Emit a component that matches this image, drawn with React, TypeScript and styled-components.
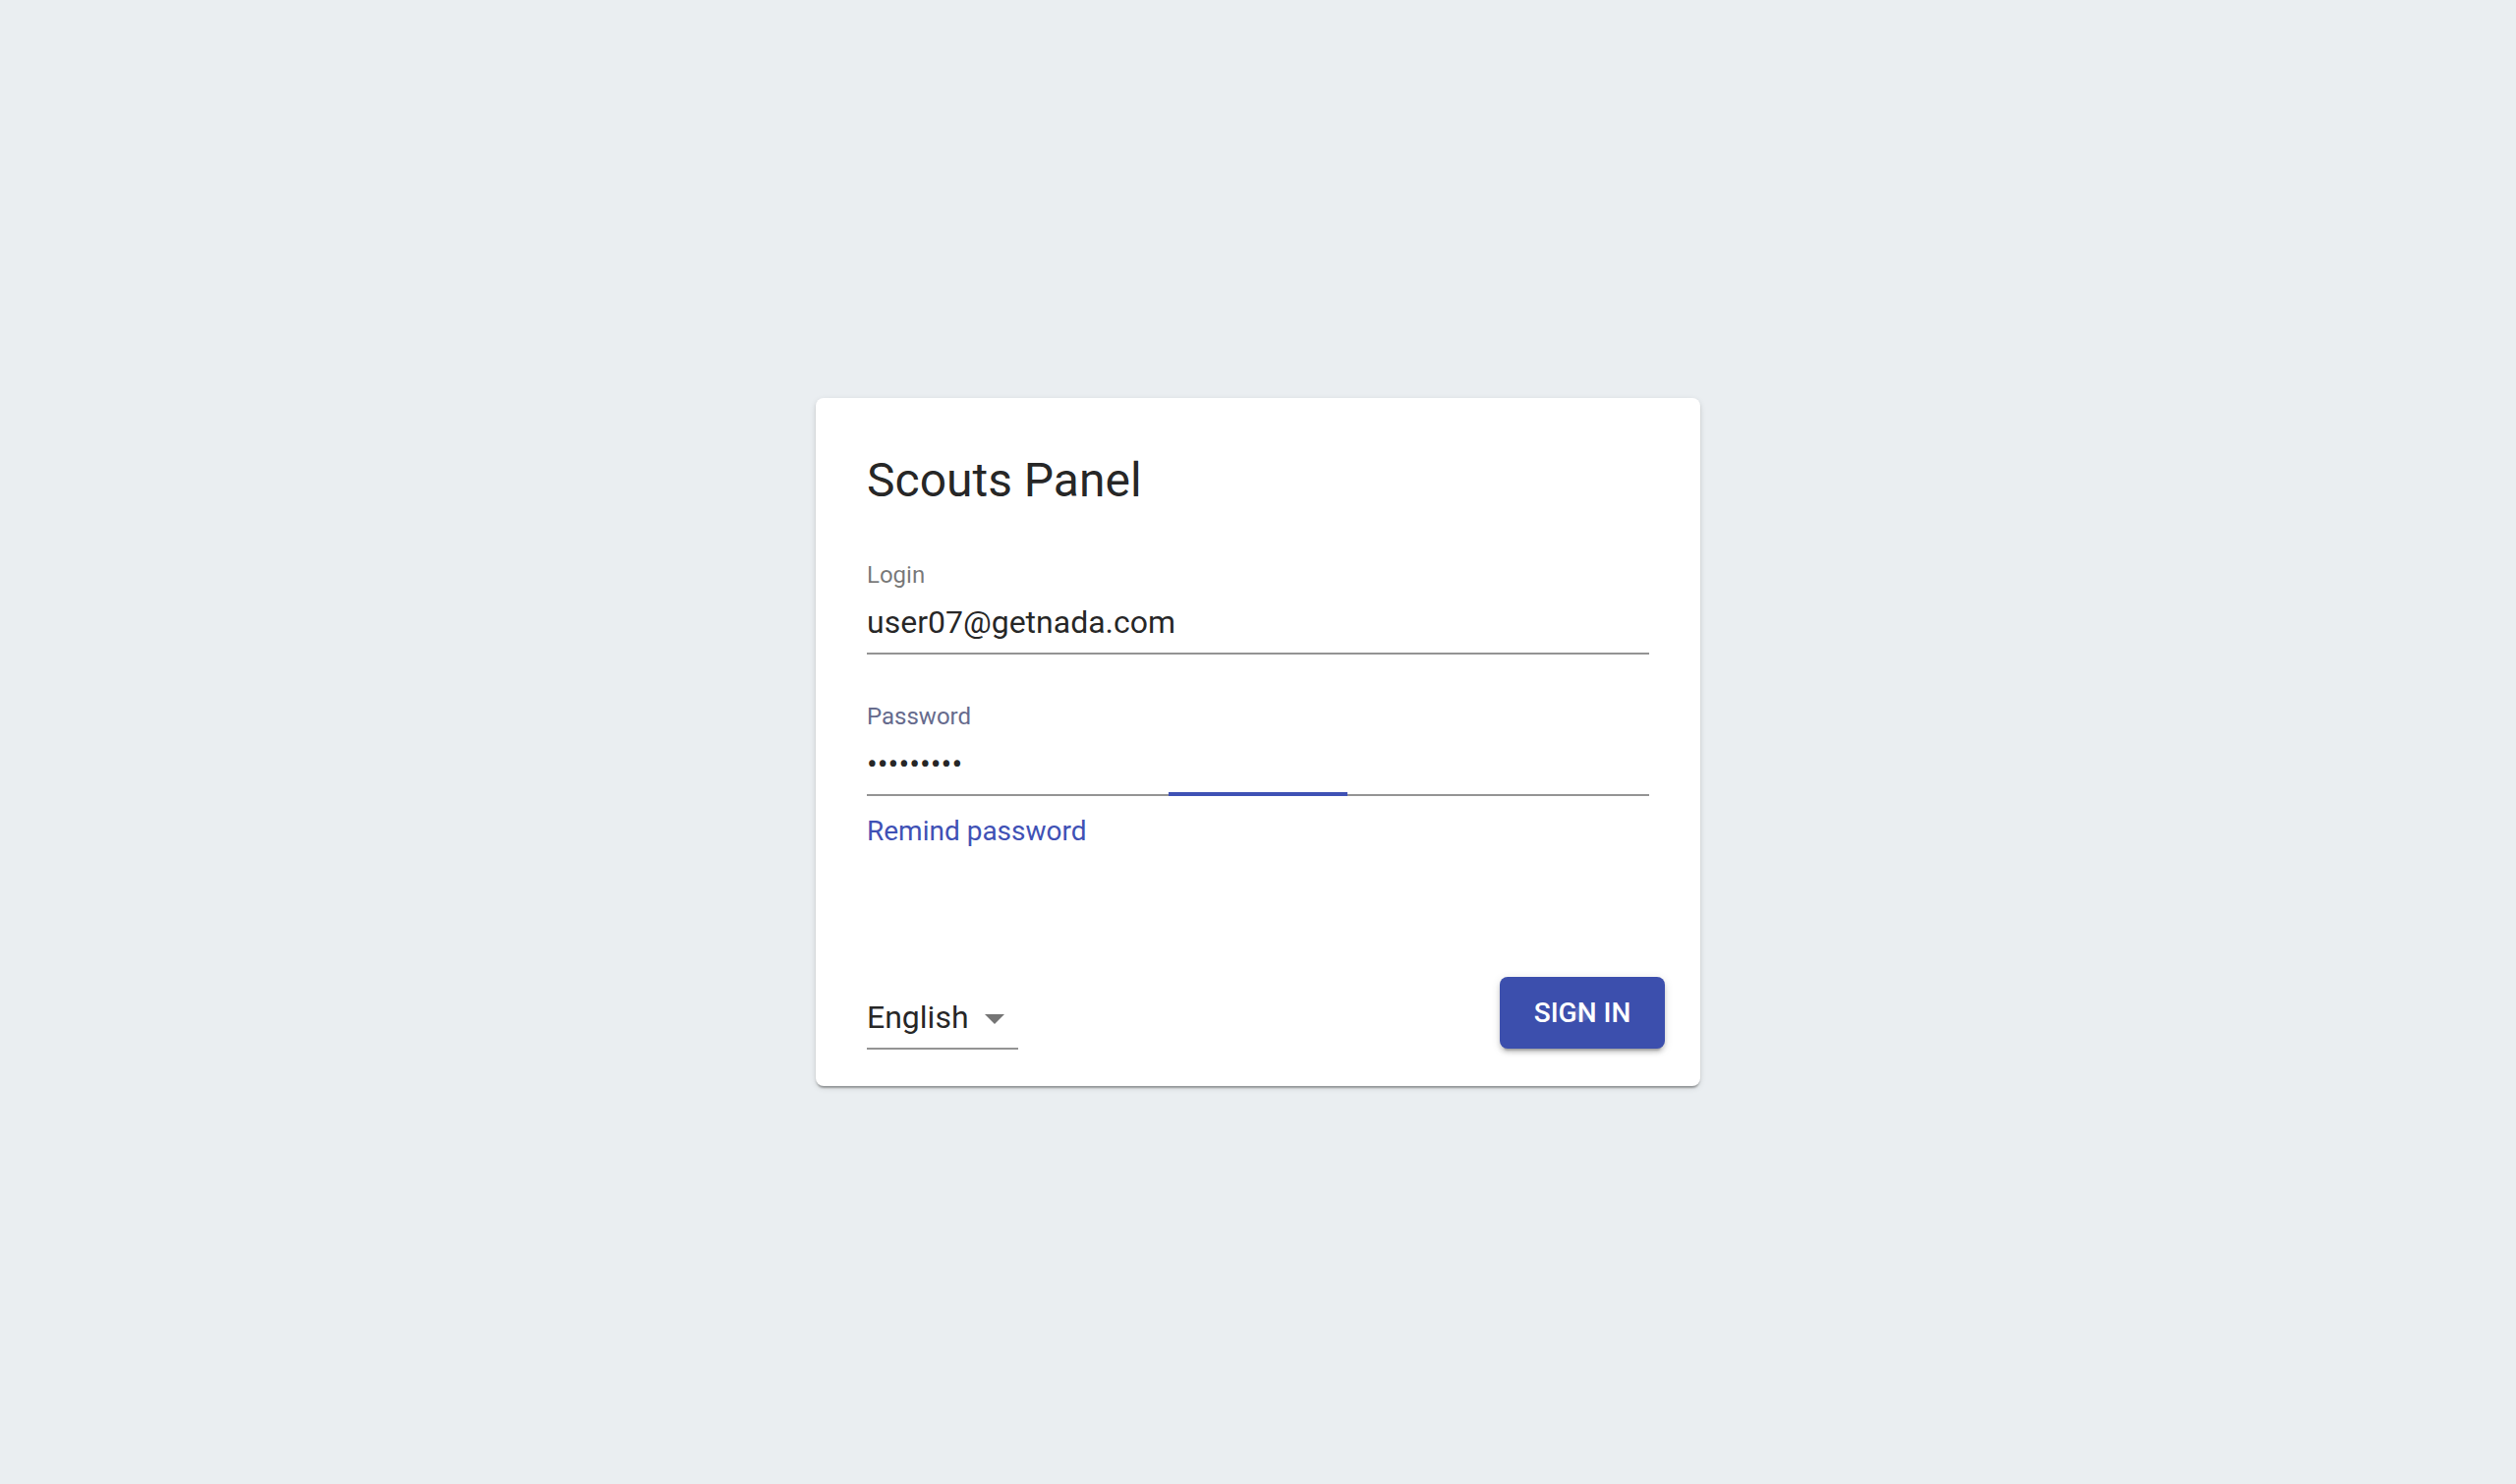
import React, { useState } from "react";
import styled, { createGlobalStyle } from "styled-components";

const GlobalStyle = createGlobalStyle`
  *, *::before, *::after { box-sizing: border-box; }
  body {
    margin: 0;
    background: #eaeef1;
    color: rgba(0, 0, 0, 0.87);
    font-family: Roboto, "Liberation Sans", sans-serif;
    -webkit-font-smoothing: antialiased;
  }
  input, select, button { font: inherit; color: inherit; }
`;

const Page = styled.main`
  min-height: 100vh;
  display: flex;
  align-items: center;
  justify-content: center;
`;

const Card = styled.form`
  width: 100%;
  max-width: 900px;
  background: #fff;
  border-radius: 8px;
  box-shadow:
    0 4px 2px -2px rgba(0, 0, 0, 0.2),
    0 2px 2px 0 rgba(0, 0, 0, 0.14),
    0 2px 6px 0 rgba(0, 0, 0, 0.12);
`;

const CardContent = styled.div`
  display: flex;
  flex-direction: column;
  gap: 48px;
  padding: 52px 52px 0;
`;

const Title = styled.h1`
  margin: 0 0 1px;
  font-size: 48px;
  font-weight: 400;
  line-height: 64px;
`;

const Field = styled.div`
  display: flex;
  flex-direction: column;
`;

const Label = styled.label<{ $active?: boolean }>`
  margin-bottom: 2px;
  font-size: 24px;
  line-height: 30px;
  color: ${(p) => (p.$active ? "#666b8d" : "rgba(0, 0, 0, 0.54)")};
`;

const InputLine = styled.div`
  position: relative;
  display: flex;
  border-bottom: 2px solid #949494;
`;

const TextInput = styled.input`
  width: 100%;
  height: 62px;
  padding: 12px 0;
  border: 0;
  outline: 0;
  background: none;
  font-size: 32px;
`;

const FocusBar = styled.span`
  position: absolute;
  bottom: -2px;
  left: 50%;
  width: 182px;
  height: 4px;
  transform: translateX(-50%);
  background: #3f51b5;
`;

const RemindLink = styled.a`
  align-self: flex-start;
  margin-top: 16px;
  font-size: 28px;
  line-height: 40px;
  color: #3f51b5;
  text-decoration: none;
`;

const CardActions = styled.div`
  display: flex;
  align-items: flex-end;
  justify-content: space-between;
  padding: 128px 36px 37px 52px;
`;

const SelectLine = styled.div`
  position: relative;
  width: 154px;
  border-bottom: 2px solid #949494;
`;

const Select = styled.select`
  display: block;
  width: 100%;
  height: 62px;
  padding: 12px 0;
  border: 0;
  outline: 0;
  background: none;
  appearance: none;
  font-size: 32px;
`;

const SelectArrow = styled.svg`
  position: absolute;
  right: 0;
  top: 8px;
  width: 48px;
  height: 48px;
  fill: rgba(0, 0, 0, 0.54);
  pointer-events: none;
`;

const SubmitButton = styled.button`
  position: relative;
  min-width: 168px;
  margin-bottom: 1px;
  padding: 12px 32px;
  border: 0;
  border-radius: 8px;
  background: #3c4fad;
  color: #fff;
  font-size: 28px;
  font-weight: 500;
  line-height: 49px;
  text-transform: uppercase;
  cursor: pointer;
  box-shadow:
    0 6px 2px -4px rgba(0, 0, 0, 0.2),
    0 4px 4px 0 rgba(0, 0, 0, 0.14),
    0 2px 10px 0 rgba(0, 0, 0, 0.12);
`;

const Ripple = styled.span`
  position: absolute;
  left: 50%;
  top: 50%;
  width: 16px;
  height: 16px;
  margin: -8px;
  border-radius: 50%;
  background: rgba(255, 255, 255, 0.12);
`;

export default function App() {
  const [login, setLogin] = useState("user07@getnada.com");
  const [password, setPassword] = useState("scouts123");

  return (
    <>
      <GlobalStyle />
      <Page>
        <Card onSubmit={(e) => e.preventDefault()}>
          <CardContent>
            <Title>Scouts Panel</Title>
            <Field>
              <Label htmlFor="login">Login</Label>
              <InputLine>
                <TextInput
                  id="login"
                  type="text"
                  value={login}
                  spellCheck={false}
                  onChange={(e) => setLogin(e.target.value)}
                />
              </InputLine>
            </Field>
            <Field>
              <Label htmlFor="password" $active>
                Password
              </Label>
              <InputLine>
                <TextInput
                  id="password"
                  type="password"
                  value={password}
                  onChange={(e) => setPassword(e.target.value)}
                />
                <FocusBar />
              </InputLine>
              <RemindLink href="#remind">Remind password</RemindLink>
            </Field>
          </CardContent>
          <CardActions>
            <SelectLine>
              <Select aria-label="Language" defaultValue="en">
                <option value="en">English</option>
              </Select>
              <SelectArrow viewBox="0 0 24 24" aria-hidden="true">
                <path d="M7 10l5 5 5-5z" />
              </SelectArrow>
            </SelectLine>
            <SubmitButton type="submit">
              Sign in
              <Ripple />
            </SubmitButton>
          </CardActions>
        </Card>
      </Page>
    </>
  );
}
